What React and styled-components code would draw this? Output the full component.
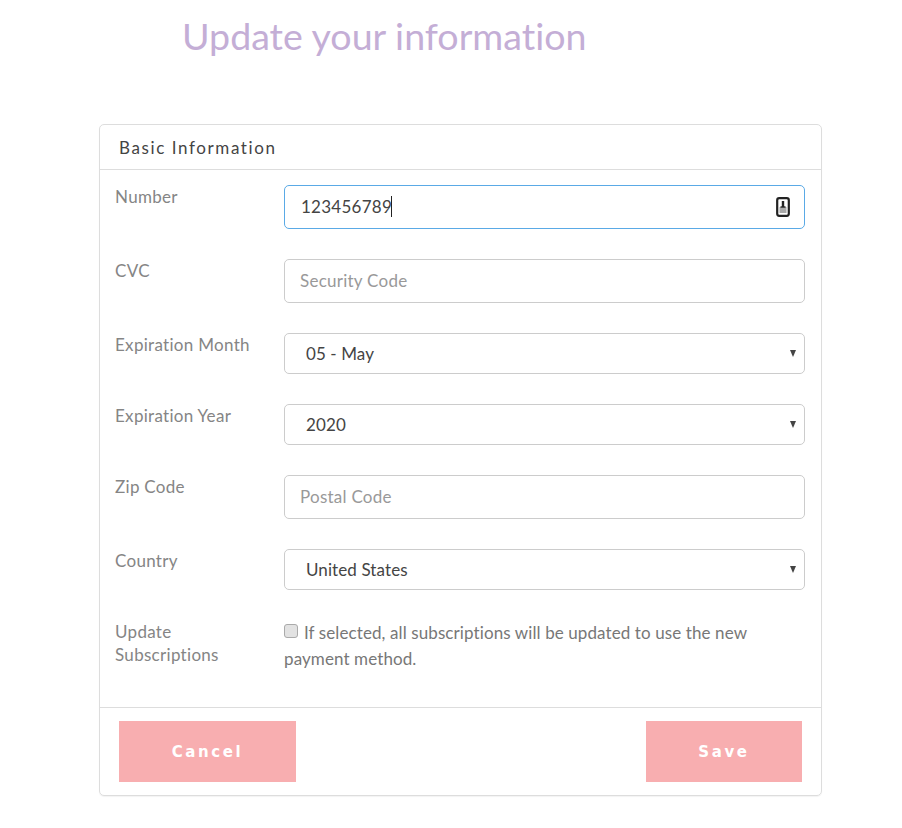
import { createGlobalStyle } from "styled-components";
import styled from "styled-components";

const GlobalStyle = createGlobalStyle`
  html, body {
    margin: 0;
    padding: 0;
    background: #fff;
    font-family: Lato, "Open Sans", sans-serif;
    font-variant-ligatures: none;
  }
`;

const Page = styled.div`
  width: 902px;
  height: 828px;
  padding: 11px 0 0 99px;
  box-sizing: border-box;
  overflow: hidden;
`;

const Title = styled.h1`
  margin: 0 0 64px 83px;
  font-size: 37.6px;
  line-height: 49px;
  font-weight: 400;
  color: #c4aed6;
`;

const Card = styled.div`
  width: 723px;
  height: 672px;
  box-sizing: border-box;
  border: 1px solid #ddd;
  border-radius: 5px;
  box-shadow: 0 1px 1px rgba(0, 0, 0, 0.05);
  display: flex;
  flex-direction: column;
`;

const CardHeader = styled.div`
  height: 45px;
  box-sizing: border-box;
  padding: 13px 19px 0;
  border-bottom: 1px solid #ddd;
  font-size: 17px;
  line-height: 20px;
  letter-spacing: 1.6px;
  color: #444;
`;

const CardBody = styled.div`
  flex: 1;
  padding: 15px 16px 0 15px;
  display: flex;
  flex-direction: column;
  gap: 30px;
`;

const Row = styled.div`
  display: grid;
  grid-template-columns: 169px 521px;
`;

const Label = styled.label`
  font-size: 17px;
  line-height: 23px;
  letter-spacing: 0.3px;
  color: #858585;
`;

const Field = styled.div`
  position: relative;
`;

const Input = styled.input`
  display: block;
  width: 100%;
  height: 44px;
  box-sizing: border-box;
  padding: 0 15px 2px ${(p) => (p.$focus ? 16 : 15)}px;
  border: 1px solid ${(p) => (p.$focus ? "#5aaae6" : "#ccc")};
  border-radius: 5px;
  outline: none;
  background: #fff;
  font-family: inherit;
  font-variant-ligatures: none;
  font-size: 17px;
  letter-spacing: 0.25px;
  color: #444;
  &::placeholder {
    color: #999;
    opacity: 1;
  }
`;

const Caret = styled.span`
  position: absolute;
  left: 107px;
  top: 11px;
  width: 1px;
  height: 21px;
  background: #222;
`;

const KeyIcon = styled.svg`
  position: absolute;
  right: 15px;
  top: 12px;
  width: 14px;
  height: 20px;
`;

const SelectField = styled(Field)`
  &::after {
    content: "";
    position: absolute;
    right: 9px;
    top: 17px;
    border-left: 3.5px solid transparent;
    border-right: 3.5px solid transparent;
    border-top: 7px solid #444;
    pointer-events: none;
  }
`;

const Select = styled.select`
  display: block;
  width: 100%;
  height: 41px;
  box-sizing: border-box;
  padding: 0 0 0 21px;
  border: 1px solid #ccc;
  border-radius: 5px;
  outline: none;
  background: #fff;
  appearance: none;
  font-family: inherit;
  font-variant-ligatures: none;
  font-size: 17px;
  letter-spacing: 0.1px;
  color: #444;
`;

const CheckText = styled.div`
  font-size: 17px;
  line-height: 26px;
  letter-spacing: 0.1px;
  color: #777;
`;

const Check = styled.input`
  appearance: none;
  width: 14px;
  height: 14px;
  margin: 0 6px 0 0;
  vertical-align: 1px;
  border: 1px solid #aaa;
  border-radius: 3px;
  background: #e2e2e2;
`;

const CardFooter = styled.div`
  height: 88px;
  box-sizing: border-box;
  padding: 13px 19px 0;
  border-top: 1px solid #ddd;
  display: flex;
  justify-content: space-between;
`;

const Button = styled.button`
  width: ${(p) => p.$width}px;
  height: 61px;
  border: none;
  border-radius: 0;
  background: #f8aeb0;
  color: #fff;
  font-family: "DejaVu Sans", Verdana, sans-serif;
  font-size: 15px;
  font-weight: 700;
  letter-spacing: 2.6px;
`;

function App() {
  return (
    <Page>
      <GlobalStyle />
      <Title>Update your information</Title>
      <Card>
        <CardHeader>Basic Information</CardHeader>
        <CardBody>
          <Row>
            <Label>Number</Label>
            <Field>
              <Input $focus readOnly value="123456789" />
              <Caret />
              <KeyIcon viewBox="0 0 14 20">
                <rect x="1.2" y="1.2" width="11.6" height="17.6" rx="2" fill="#fff" stroke="#222" strokeWidth="2.2" />
                <rect x="3.5" y="10" width="7" height="6" fill="#aaa" />
                <path d="M7 4v6" stroke="#222" strokeWidth="2.4" />
                <path d="M4.5 10h5" stroke="#222" strokeWidth="1.4" />
              </KeyIcon>
            </Field>
          </Row>
          <Row>
            <Label>CVC</Label>
            <Field>
              <Input placeholder="Security Code" />
            </Field>
          </Row>
          <Row>
            <Label>Expiration Month</Label>
            <SelectField>
              <Select defaultValue="05">
                <option value="05">05 - May</option>
              </Select>
            </SelectField>
          </Row>
          <Row>
            <Label>Expiration Year</Label>
            <SelectField>
              <Select defaultValue="2020">
                <option value="2020">2020</option>
              </Select>
            </SelectField>
          </Row>
          <Row>
            <Label>Zip Code</Label>
            <Field>
              <Input placeholder="Postal Code" />
            </Field>
          </Row>
          <Row>
            <Label>Country</Label>
            <SelectField>
              <Select defaultValue="US">
                <option value="US">United States</option>
              </Select>
            </SelectField>
          </Row>
          <Row>
            <Label>
              Update
              <br />
              Subscriptions
            </Label>
            <CheckText>
              <Check type="checkbox" />
              If selected, all subscriptions will be updated to use the new payment method.
            </CheckText>
          </Row>
        </CardBody>
        <CardFooter>
          <Button $width={177}>Cancel</Button>
          <Button $width={156}>Save</Button>
        </CardFooter>
      </Card>
    </Page>
  );
}

export default App;
